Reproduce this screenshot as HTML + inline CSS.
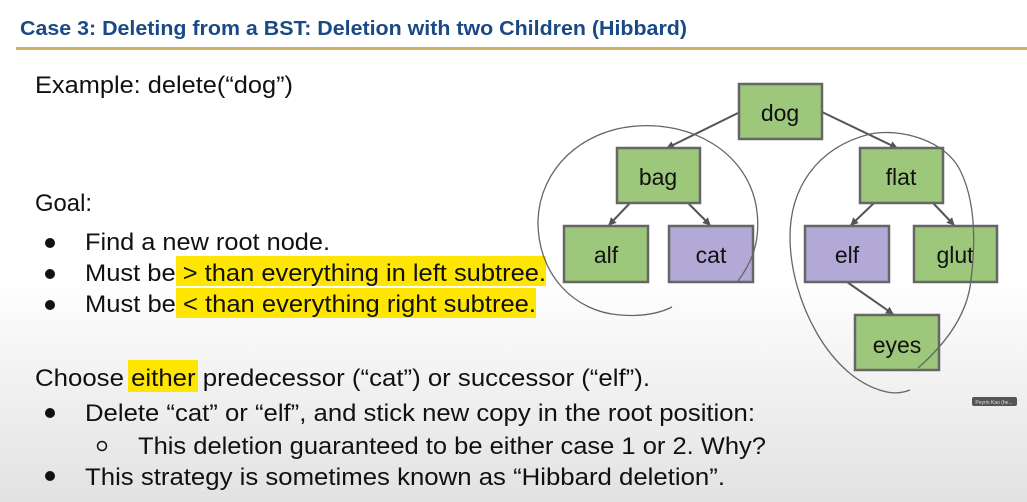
<!DOCTYPE html>
<html><head><meta charset="utf-8"><style>
html,body{margin:0;padding:0;background:#fff;}
svg{display:block;font-family:"Liberation Sans",sans-serif;}
</style></head><body>
<svg width="1027" height="502" viewBox="0 0 1027 502" xmlns="http://www.w3.org/2000/svg">
<defs>
<linearGradient id="bg" x1="0" y1="0" x2="0" y2="1">
<stop offset="0" stop-color="#ffffff"/><stop offset="0.55" stop-color="#ffffff"/><stop offset="0.72" stop-color="#f4f4f4"/><stop offset="1" stop-color="#e2e2e2"/>
</linearGradient>
<marker id="ar" markerWidth="8" markerHeight="8" refX="7" refY="4" orient="auto" markerUnits="userSpaceOnUse"><path d="M0,0 L8,4 L0,8 z" fill="#555"/></marker>
</defs>
<rect width="1027" height="502" fill="url(#bg)"/>
<text x="20" y="35" font-size="20" font-weight="bold" fill="#1a4a86" textLength="667" lengthAdjust="spacingAndGlyphs">Case 3: Deleting from a BST: Deletion with two Children (Hibbard)</text>
<rect x="16" y="47" width="1011" height="3" fill="#c9b46a"/>
<g font-size="24" fill="#111">
<text x="35" y="93" textLength="258" lengthAdjust="spacingAndGlyphs">Example: delete(“dog”)</text>
<text x="35" y="211" textLength="57" lengthAdjust="spacingAndGlyphs">Goal:</text>
<rect x="176" y="256" width="370" height="30" fill="#ffe600"/>
<rect x="176" y="288" width="360" height="30" fill="#ffe600"/>
<rect x="128" y="360" width="70" height="32" fill="#ffe600"/>
<circle cx="50" cy="243" r="5"/><circle cx="50" cy="274" r="5"/><circle cx="50" cy="305" r="5"/>
<text x="85" y="250" textLength="245" lengthAdjust="spacingAndGlyphs">Find a new root node.</text>
<text x="85" y="281" textLength="461" lengthAdjust="spacingAndGlyphs">Must be &gt; than everything in left subtree.</text>
<text x="85" y="312" textLength="451" lengthAdjust="spacingAndGlyphs">Must be &lt; than everything right subtree.</text>
<text x="35" y="386" textLength="615" lengthAdjust="spacingAndGlyphs">Choose either predecessor (“cat”) or successor (“elf”).</text>
<circle cx="50" cy="413" r="5"/><circle cx="50" cy="476" r="5"/>
<circle cx="102" cy="446" r="4.5" fill="none" stroke="#111" stroke-width="1.5"/>
<text x="85" y="421" textLength="670" lengthAdjust="spacingAndGlyphs">Delete “cat” or “elf”, and stick new copy in the root position:</text>
<text x="138" y="454" textLength="628" lengthAdjust="spacingAndGlyphs">This deletion guaranteed to be either case 1 or 2. Why?</text>
<text x="85" y="485" textLength="640" lengthAdjust="spacingAndGlyphs">This strategy is sometimes known as “Hibbard deletion”.</text>
</g>
<g stroke="#555" stroke-width="2" marker-end="url(#ar)">
<line x1="738" y1="113" x2="667" y2="148"/>
<line x1="822" y1="112" x2="897" y2="148"/>
<line x1="630" y1="203" x2="609" y2="225"/>
<line x1="688" y1="203" x2="710" y2="225"/>
<line x1="874" y1="203" x2="851" y2="225"/>
<line x1="933" y1="203" x2="954" y2="225"/>
<line x1="847" y1="282" x2="893" y2="314"/>
</g>
<g stroke="#666" stroke-width="2.5">
<rect x="739" y="84" width="83" height="55" fill="#9dc77a"/>
<rect x="617" y="148" width="83" height="55" fill="#9dc77a"/>
<rect x="860" y="148" width="83" height="55" fill="#9dc77a"/>
<rect x="564" y="226" width="84" height="56" fill="#9dc77a"/>
<rect x="669" y="226" width="84" height="56" fill="#b3a9d6"/>
<rect x="805" y="226" width="84" height="56" fill="#b3a9d6"/>
<rect x="914" y="226" width="83" height="56" fill="#9dc77a"/>
<rect x="855" y="315" width="84" height="55" fill="#9dc77a"/>
</g>
<g font-size="23" fill="#111" text-anchor="middle">
<text x="780" y="121">dog</text><text x="658" y="185">bag</text><text x="901" y="185">flat</text>
<text x="606" y="263">alf</text><text x="711" y="263">cat</text><text x="847" y="263">elf</text>
<text x="955" y="263">glut</text><text x="897" y="353">eyes</text>
</g>
<g fill="none" stroke="#666" stroke-width="1.3">
<path d="M738,281 C752,262 762,240 756,205 C745,150 690,122 637,126 C580,130 540,170 538,220 C537,275 575,312 620,315 C645,317 662,312 672,307"/>
<path d="M918,368 C950,340 968,310 971,280 C976,240 975,200 960,170 C945,140 900,128 870,134 C815,148 790,190 790,237 C790,300 830,380 887,392 C897,394 905,392 910,390"/>
</g>
<rect x="972" y="397" width="45" height="9" rx="2" fill="#555"/>
<text x="994" y="404" font-size="5" fill="#ddd" text-anchor="middle">Peyrin Kao (he...</text>
</svg>
</body></html>
